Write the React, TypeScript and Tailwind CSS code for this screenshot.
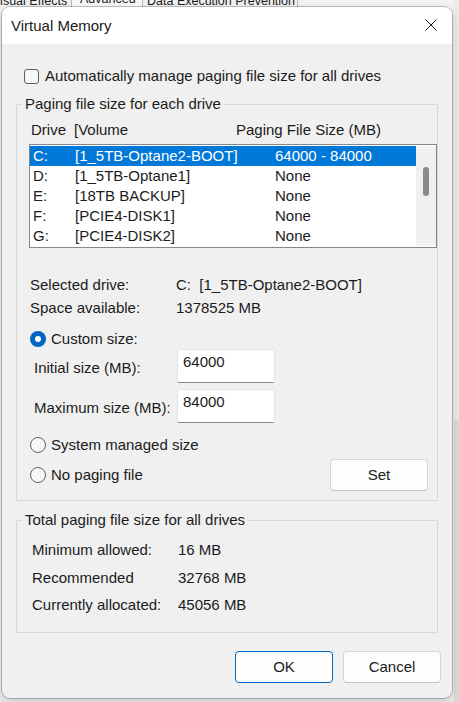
import React from "react";

const rows: [string, string, string][] = [
  ["C:", "[1_5TB-Optane2-BOOT]", "64000 - 84000"],
  ["D:", "[1_5TB-Optane1]", "None"],
  ["E:", "[18TB BACKUP]", "None"],
  ["F:", "[PCIE4-DISK1]", "None"],
  ["G:", "[PCIE4-DISK2]", "None"],
];

function Radio({ checked }: { checked?: boolean }) {
  if (checked) {
    return (
      <span className="flex h-[16px] w-[16px] shrink-0 items-center justify-center rounded-full bg-[#0067c0]">
        <span className="h-[6px] w-[6px] rounded-full bg-white" />
      </span>
    );
  }
  return <span className="h-[16px] w-[16px] shrink-0 rounded-full border border-[#5f5f5f] bg-[#f7f7f7]" />;
}

function SizeInput({ value }: { value: string }) {
  return (
    <div className="h-[34px] w-[98px] rounded-[2px] border border-[#e3e3e3] border-b-[#8a8a8a] bg-white pl-[5px] pt-[2px] leading-[20px]">
      {value}
    </div>
  );
}

export default function App() {
  return (
    <div className="relative h-[702px] w-[459px] overflow-hidden bg-[#f0f0f0] font-['Liberation_Sans',Arial,sans-serif] text-[15px] leading-[20px] text-[#1b1b1b]">
      {/* background property sheet tabs (behind the dialog) */}
      <div className="flex h-[8px] overflow-hidden bg-[#f3f3f3] text-[12.5px] leading-[16px] text-[#1b1b1b]">
        <div className="-ml-[8px] mt-[-7px] w-[79px] shrink-0 whitespace-nowrap">Visual Effects</div>
        <div className="w-px shrink-0 bg-[#b9b9b9]" />
        <div className="mt-[-9px] w-[70px] shrink-0 whitespace-nowrap bg-[#f9f9f9] pl-[8px]">Advanced</div>
        <div className="w-px shrink-0 bg-[#b9b9b9]" />
        <div className="mt-[-7px] w-[154px] shrink-0 whitespace-nowrap pl-[4px]">Data Execution Prevention</div>
        <div className="w-px shrink-0 bg-[#b9b9b9]" />
      </div>
      <div className="absolute right-0 top-0 h-full w-[6px] bg-[#ececec]" />
      <div className="absolute right-[0px] top-[420px] h-[282px] w-[5px] bg-[#dcdcdc]" />

      {/* dialog window */}
      <div className="absolute left-[2px] top-[7px] flex h-[691px] w-[450px] flex-col rounded-[8px] bg-[#f0f0f0] shadow-[0_0_0_1px_rgba(0,0,0,0.22),0_4px_12px_rgba(0,0,0,0.18)]">
        <div className="flex h-[37px] shrink-0 items-center justify-between rounded-t-[8px] bg-white pl-[9px] pr-[15px]">
          <span className="pt-[1px]">Virtual Memory</span>
          <svg width="12" height="12" viewBox="0 0 12 12" className="mt-[-1px]">
            <path d="M0.5 0.5 L11.5 11.5 M11.5 0.5 L0.5 11.5" stroke="#1b1b1b" strokeWidth="1" fill="none" />
          </svg>
        </div>

        <div className="flex flex-col px-[14px]">
          <div className="ml-[8px] mt-[22px] flex h-[20px] items-center gap-[6px]">
            <span className="h-[15px] w-[15px] rounded-[3px] border border-[#5f5f5f] bg-[#f7f7f7]" />
            <span>Automatically manage paging file size for all drives</span>
          </div>

          <fieldset className="mt-[8px] w-[422px] border border-[#d8d8d8] pb-[9px]">
            <legend className="ml-[5px] px-[3px] leading-[20px]">Paging file size for each drive</legend>
            <div className="mt-[6px] flex h-[20px] items-center pl-[14px]">
              <span className="w-[43px]">Drive</span>
              <span className="w-[162px]">[Volume</span>
              <span>Paging File Size (MB)</span>
            </div>
            <div className="ml-[12px] mt-[4px] flex h-[104px] w-[408px] border border-[#828790] bg-white py-[1px]">
              <div className="flex w-[386px] flex-col">
                {rows.map((r, i) => (
                  <div
                    key={r[0]}
                    className={
                      i === 0
                        ? "flex h-[20px] items-center bg-[#0078d7] pl-[3px] text-white"
                        : "flex h-[20px] items-center pl-[3px]"
                    }
                  >
                    <span className="w-[42px]">{r[0]}</span>
                    <span className="w-[200px]">{r[1]}</span>
                    <span>{r[2]}</span>
                  </div>
                ))}
              </div>
              <div className="w-[20px] bg-[#f0f0f0]">
                <div className="ml-[7px] mt-[21px] h-[29px] w-[6px] rounded-[3px] bg-[#8a8a8a]" />
              </div>
            </div>

            <div className="mt-[27px] flex h-[20px] items-center pl-[13px]">
              <span className="w-[146px]">Selected drive:</span>
              <span className="whitespace-pre">C:  [1_5TB-Optane2-BOOT]</span>
            </div>
            <div className="mt-[3px] flex h-[20px] items-center pl-[13px]">
              <span className="w-[146px]">Space available:</span>
              <span>1378525 MB</span>
            </div>

            <div className="mt-[11px] flex h-[20px] items-center gap-[5px] pl-[13px]">
              <Radio checked />
              <span>Custom size:</span>
            </div>
            <div className="flex h-[34px] items-center pl-[17px]">
              <span className="w-[143px] pt-[4px]">Initial size (MB):</span>
              <SizeInput value="64000" />
            </div>
            <div className="mt-[6px] flex h-[34px] items-center pl-[17px]">
              <span className="w-[143px] pt-[4px]">Maximum size (MB):</span>
              <SizeInput value="84000" />
            </div>

            <div className="mt-[12px] flex h-[20px] items-center gap-[5px] pl-[13px]">
              <Radio />
              <span>System managed size</span>
            </div>
            <div className="mt-[4px] flex h-[32px] items-center justify-between pl-[13px] pr-[9px]">
              <div className="flex items-center gap-[5px]">
                <Radio />
                <span>No paging file</span>
              </div>
              <button className="h-[32px] w-[98px] rounded-[4px] border border-[#d6d6d6] border-b-[#c2c2c2] bg-[#fdfdfd] text-center">
                Set
              </button>
            </div>
          </fieldset>

          <fieldset className="mt-[9px] w-[422px] border border-[#d8d8d8] pb-[17px]">
            <legend className="ml-[5px] px-[3px] leading-[20px]">Total paging file size for all drives</legend>
            <div className="mt-[10px] flex h-[20px] items-center pl-[15px]">
              <span className="w-[146px]">Minimum allowed:</span>
              <span>16 MB</span>
            </div>
            <div className="mt-[8px] flex h-[20px] items-center pl-[15px]">
              <span className="w-[146px]">Recommended</span>
              <span>32768 MB</span>
            </div>
            <div className="mt-[7px] flex h-[20px] items-center pl-[15px]">
              <span className="w-[146px]">Currently allocated:</span>
              <span>45056 MB</span>
            </div>
          </fieldset>
        </div>

        <div className="mt-[18px] flex justify-end gap-[10px] pr-[11px]">
          <button className="h-[32px] w-[98px] rounded-[4px] border border-[#0067c0] bg-[#fdfdfd] text-center">OK</button>
          <button className="h-[32px] w-[98px] rounded-[4px] border border-[#d6d6d6] border-b-[#c2c2c2] bg-[#fdfdfd] text-center">
            Cancel
          </button>
        </div>
      </div>
    </div>
  );
}
